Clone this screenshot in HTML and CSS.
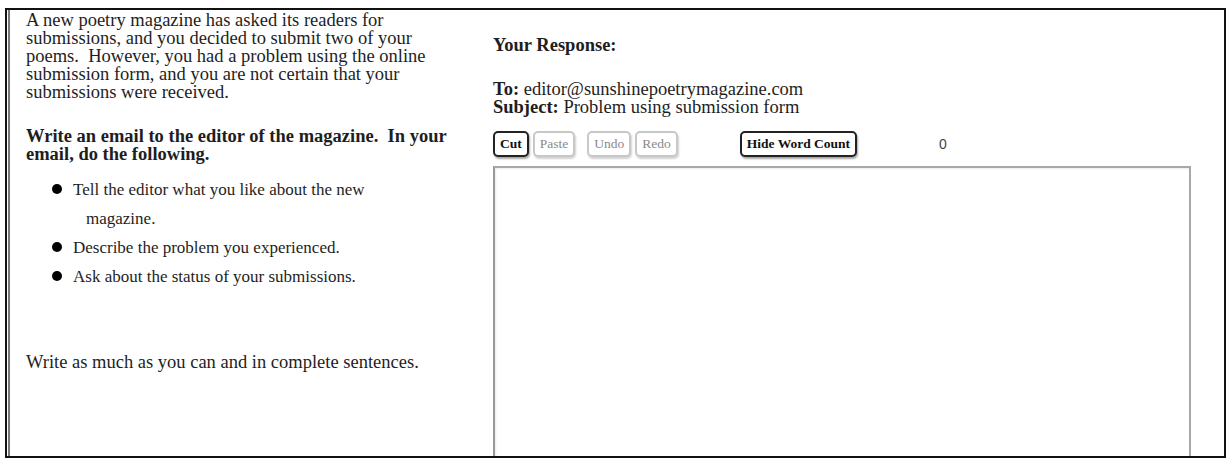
FILE: index.html
```html
<!DOCTYPE html>
<html lang="en">
<head>
<meta charset="utf-8">
<title>Email Task</title>
<link rel="stylesheet" href="styles.css">
</head>
<body>
<div class="frame">
  <section class="prompt">
    <p class="intro">A new poetry magazine has asked its readers for submissions, and you decided to submit two of your poems.&nbsp; However, you had a problem using the online submission form, and you are not certain that your submissions were received.</p>
    <p class="task">Write an email to the editor of the magazine.&nbsp; In your email, do the following.</p>
    <ul class="steps">
      <li>Tell the editor what you like about the new magazine.</li>
      <li>Describe the problem you experienced.</li>
      <li>Ask about the status of your submissions.</li>
    </ul>
    <p class="closing">Write as much as you can and in complete sentences.</p>
  </section>
  <section class="response">
    <h2 class="resp-title">Your Response:</h2>
    <div class="headers">
      <div><b>To:</b> editor@sunshinepoetrymagazine.com</div>
      <div><b>Subject:</b> Problem using submission form</div>
    </div>
    <div class="toolbar">
      <div class="edit-buttons">
        <button class="btn btn-active">Cut</button>
        <button class="btn btn-disabled">Paste</button>
        <button class="btn btn-disabled btn-undo">Undo</button>
        <button class="btn btn-disabled">Redo</button>
      </div>
      <button class="btn btn-active btn-count">Hide Word Count</button>
      <span class="count">0</span>
    </div>
    <textarea class="answer"></textarea>
  </section>
</div>
</body>
</html>
```
FILE: styles.css
```css
html, body {
  margin: 0;
  padding: 0;
  background: #fff;
}

body {
  font-family: "Liberation Serif", "Times New Roman", serif;
  color: #1e1e1e;
  font-size: 18.5px;
  overflow: hidden;
}

.frame {
  margin: 8px 0 0 5px;
  width: 1221px;
  height: 450px;
  box-sizing: border-box;
  border: 2px solid #111;
  display: grid;
  grid-template-columns: 472px 1fr;
  overflow: hidden;
}

.prompt {
  margin-left: 1px;
  border-left: 2px solid #777;
  padding: 1px 0 0 16px;
  box-sizing: border-box;
}

.prompt p {
  margin: 0;
  line-height: 18px;
  width: 434px;
}

.task {
  font-weight: bold;
  margin-top: 26px !important;
}

.steps {
  list-style: none;
  margin: 12px 0 0 0;
  padding: 0;
  width: 400px;
  font-size: 17px;
  line-height: 29px;
}

.steps li {
  margin-left: 26px;
  padding-left: 34px;
  text-indent: -34px;
}

.steps li::before {
  content: "";
  display: inline-block;
  width: 10px;
  height: 10px;
  border-radius: 50%;
  background: #000;
  margin-right: 11px;
  vertical-align: 1px;
  text-indent: 0;
}

.closing {
  margin-top: 62px !important;
}

.response {
  padding: 25px 0 0 14px;
}

.resp-title {
  margin: 0;
  font-size: 18.5px;
  line-height: 20px;
  font-weight: bold;
}

.headers {
  margin-top: 25px;
  line-height: 18px;
}

.toolbar {
  margin-top: 15px;
  display: flex;
  align-items: center;
  height: 26px;
}

.edit-buttons {
  display: flex;
  gap: 4px;
}

.btn-undo {
  margin-left: 8px;
}

.btn {
  font-family: "Liberation Serif", "Times New Roman", serif;
  font-size: 13.5px;
  height: 26px;
  padding: 0 5px;
  background: #fff;
  border-radius: 5px;
  box-sizing: border-box;
  line-height: 22px;
}

.btn-active {
  font-weight: bold;
  color: #111;
  border: 2px solid #222;
  box-shadow: 1px 2px 2px rgba(0, 0, 0, 0.35);
}

.btn-disabled {
  color: #8a8a8a;
  padding: 0 5px;
  border: 2px solid #c8c8c8;
  box-shadow: 1px 2px 2px rgba(0, 0, 0, 0.18);
}

.btn-count {
  margin-left: 62px;
  padding: 0 5px;
}

.count {
  margin-left: 82px;
  font-family: "Liberation Sans", Arial, sans-serif;
  font-size: 14px;
  color: #444;
}

.answer {
  display: block;
  margin-top: 9px;
  width: 698px;
  height: 400px;
  box-sizing: border-box;
  border: 2px solid #a8a8a8;
  border-left-color: #999;
  box-shadow: inset 1px 1px 2px rgba(0, 0, 0, 0.08);
  resize: none;
  background: #fff;
  outline: none;
}
```
